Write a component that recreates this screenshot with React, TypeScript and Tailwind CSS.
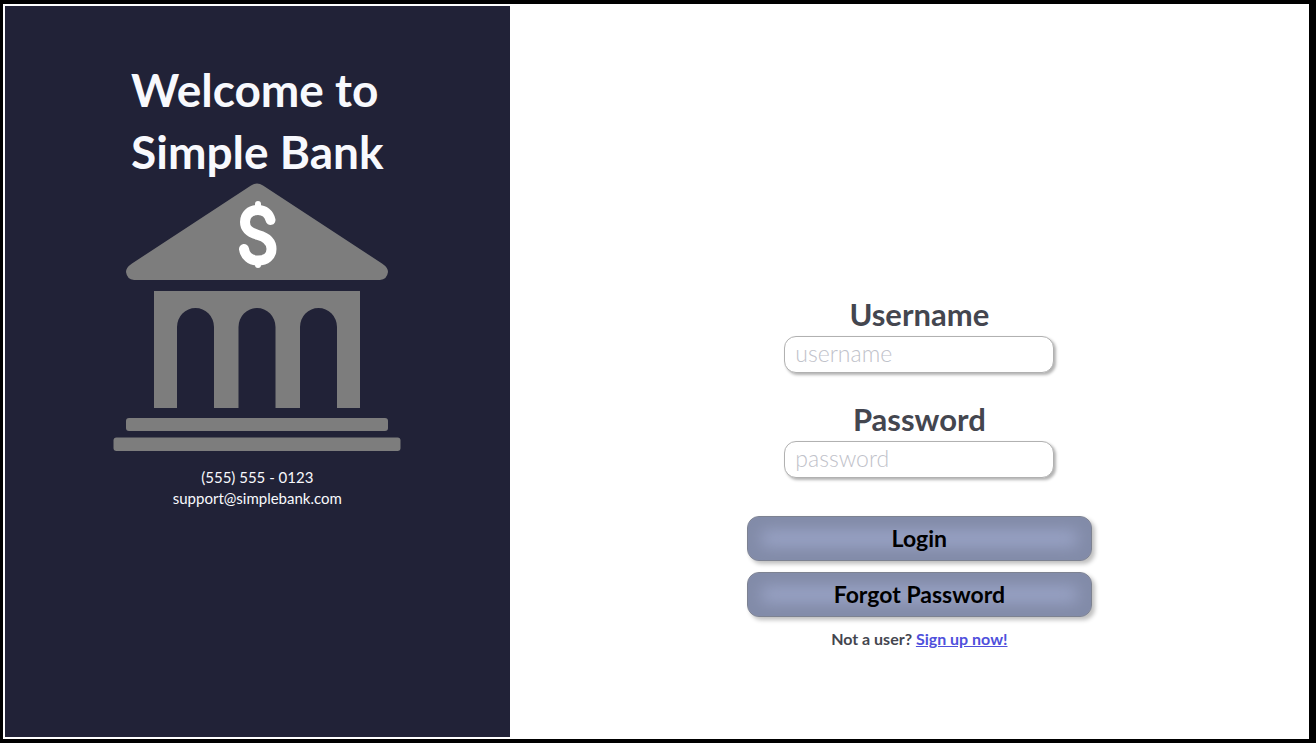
import { useState } from "react";
import type { InputHTMLAttributes, ReactNode } from "react";

function BankLogo() {
  return (
    <svg width="288" height="268" viewBox="0 0 288 268" role="img" aria-label="Simple Bank" className="max-w-full">
      <g fill="#7d7d7d">
        <path d="M138 2.500 Q144 -1.500 150 2.500 L269 80.500 Q275 84.500 275 89 Q274 96.500 267 97 H21 Q14 96.500 13 89 Q13 84.500 19 80.500 Z" />
        <path
          fillRule="evenodd"
          d="M41 108 H247 V225 H224 V144 A18.500 19 0 0 0 187 144 V225 H162.500 V144 A18.500 19 0 0 0 125.500 144 V225 H101 V144 A18.500 19 0 0 0 64 144 V225 H41 Z"
        />
        <rect x="13" y="235" width="262" height="13" rx="3" />
        <rect x="0.500" y="254.500" width="287" height="13.500" rx="3" />
      </g>
      <g fill="none" stroke="#ffffff" strokeLinecap="round">
        <path
          strokeWidth="10"
          d="M157.500 37 C156 30.500 151.500 27 145 27 C137 27 132 32 132 39 C132 46 136.500 49.500 145 52 C154 54.500 158.500 59 158.500 66 C158.500 73 153 77.500 145 77.500 C137.500 77.500 132 73 131 66"
        />
        <path strokeWidth="6" d="M145 21 V26 M145 78 V82" />
      </g>
    </svg>
  );
}

interface FieldProps extends InputHTMLAttributes<HTMLInputElement> {
  id: string;
  label: string;
}

function Field({ id, label, ...rest }: FieldProps) {
  return (
    <div className="flex w-[270px] max-w-full flex-col items-center">
      <label htmlFor={id} className="text-[31px] leading-11 font-bold text-[#44464f]">
        {label}
      </label>
      <input
        id={id}
        className="h-[37px] w-full rounded-xl border border-[#b1b1b1] bg-white px-2.5 pb-1 text-[23px] font-light text-[#44464f] shadow-[2px_2px_3px_rgba(0,0,0,0.3)] placeholder:text-[#bfc2ca]"
        {...rest}
      />
    </div>
  );
}

function ActionButton({ type, children }: { type: "submit" | "button"; children: ReactNode }) {
  return (
    <button
      type={type}
      className="h-[45px] w-full cursor-pointer rounded-xl border border-[#7d8291] bg-[#9ca6c9] text-[23px] font-bold text-black shadow-[inset_0_0_16px_14px_#828ba8,3px_3px_4px_rgba(0,0,0,0.25)]"
    >
      {children}
    </button>
  );
}

export default function App() {
  const [username, setUsername] = useState("");
  const [password, setPassword] = useState("");

  return (
    <div className="flex min-h-screen bg-black py-1 pr-[7px] pl-[3px] font-['Lato','Open_Sans',sans-serif]">
      <main className="flex flex-1 bg-white py-0.5 pl-0.5">
        <section className="flex w-[38.7%] flex-col items-center bg-[#212237] pt-[53px] text-[#f8f9fd]">
          <h1 className="text-[46px] leading-[62px] font-bold">
            Welcome to
            <br />
            Simple Bank
          </h1>
          <BankLogo />
          <address className="mt-4 text-center text-[15px] leading-[21px] not-italic">
            (555) 555 - 0123
            <br />
            <a href="mailto:support@simplebank.com">support@simplebank.com</a>
          </address>
        </section>
        <section className="flex flex-1 flex-col items-center pt-[286px] pl-5">
          <form className="flex w-[345px] max-w-full flex-col items-center" onSubmit={(e) => e.preventDefault()}>
            <div className="flex flex-col items-center gap-6">
              <Field
                id="username"
                label="Username"
                type="text"
                placeholder="username"
                autoComplete="username"
                value={username}
                onChange={(e) => setUsername(e.target.value)}
              />
              <Field
                id="password"
                label="Password"
                type="password"
                placeholder="password"
                autoComplete="current-password"
                value={password}
                onChange={(e) => setPassword(e.target.value)}
              />
            </div>
            <div className="mt-[38px] flex w-full flex-col gap-[11px]">
              <ActionButton type="submit">Login</ActionButton>
              <ActionButton type="button">Forgot Password</ActionButton>
            </div>
            <p className="mt-3 text-base leading-5 font-bold text-[#44464f]">
              Not a user?{" "}
              <a href="#signup" className="text-[#4f50dc] underline">
                Sign up now!
              </a>
            </p>
          </form>
        </section>
      </main>
    </div>
  );
}
